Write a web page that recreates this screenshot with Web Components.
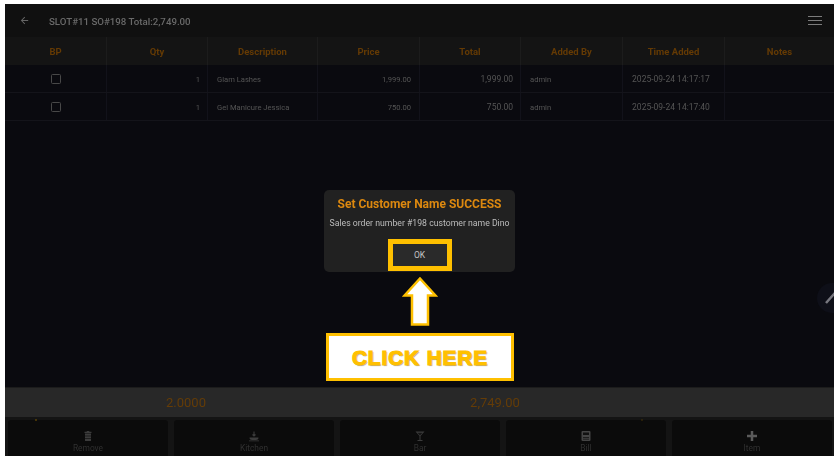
<!DOCTYPE html>
<html>
<head>
<meta charset="utf-8">
<title>SLOT#11</title>
<style>
html,body{margin:0;padding:0;background:#fff;}
body{font-family:Roboto,"Liberation Sans",sans-serif;}
</style>
</head>
<body>
<pos-screen>
    <pos-topbar title-text="SLOT#11 SO#198 Total:2,749.00"></pos-topbar>
    <order-table>
        <order-row bp qty="1" desc="Glam Lashes" price="1,999.00" total="1,999.00" by="admin" time="2025-09-24 14:17:17"></order-row>
        <order-row bp qty="1" desc="Gel Manicure Jessica" price="750.00" total="750.00" by="admin" time="2025-09-24 14:17:40"></order-row>
    </order-table>
    <total-bar qty="2.0000" amount="2,749.00"></total-bar>
    <action-bar>
        <action-button icon="trash" label="Remove"></action-button>
        <action-button icon="kitchen" label="Kitchen"></action-button>
        <action-button icon="bar" label="Bar"></action-button>
        <action-button icon="bill" label="Bill"></action-button>
        <action-button icon="plus" label="Item"></action-button>
    </action-bar>
    <msg-dialog slot="overlay" heading="Set Customer Name SUCCESS" message="Sales order number #198 customer name Dino"></msg-dialog>
    <click-callout slot="overlay"></click-callout>
</pos-screen>

<script>
const COLS = '102px 101px 110px 102px 101px 102px 102px 109px';

class PosScreen extends HTMLElement{
    constructor(){
        super();
        this.attachShadow({mode: 'open'});
        this.shadowRoot.innerHTML = `
        <style>
            :host{
                display: flex;
                flex-direction: column;
                position: relative;
                overflow: hidden;
                width: 829px;
                height: 452px;
                margin: 4px 4px 6px 5px;
                background: #0a0a0f;
                font-family: Roboto, "Liberation Sans", sans-serif;
            }
            .fab{
                position: absolute;
                left: 812px;
                top: 279px;
                width: 30px;
                height: 30px;
                border-radius: 50%;
                background: #0e0f18;
            }
            .fab svg{position: absolute; left: 8px; top: 8px; overflow: visible; filter: blur(.4px);}
            .dot{position: absolute; width: 2px; height: 2px; top: 415px; background: #5a4206; border-radius: 50%;}
        </style>
        <slot></slot>
        <div class="fab"><svg width="20" height="20" viewBox="0 0 20 20"><path d="M1 12 L9 3 L18 12" fill="none" stroke="#77777f" stroke-width="2.5"/></svg></div>
        <div class="dot" style="left:30px"></div>
        <div class="dot" style="left:636px;opacity:.5"></div>
        <slot name="overlay"></slot>`;
    }
}

class PosTopbar extends HTMLElement{
    constructor(){
        super();
        this.attachShadow({mode: 'open'});
    }
    connectedCallback(){
        this.shadowRoot.innerHTML = `
        <style>
            :host{
                display: flex;
                align-items: center;
                height: 33px;
                flex: none;
                background: #101010;
                color: #6a6a6a;
            }
            .back{margin-left: 14px; width: 11px; height: 11px; filter: blur(.4px);}
            .title{margin-left: 19px; font-size: 9.7px; font-weight: 500; flex: 1; position: relative; top: 1px; filter: blur(.4px);}
            .menu{margin-right: 12px; width: 14px; display: flex; flex-direction: column; gap: 2.6px; filter: blur(.3px);}
            .menu i{display: block; height: 1.4px; background: #7c7c7c;}
        </style>
        <svg class="back" viewBox="0 0 24 24"><path d="M20 11H7.8l5.6-5.6L12 4l-8 8 8 8 1.4-1.4L7.8 13H20z" fill="#666"/></svg>
        <div class="title">${this.getAttribute('title-text')}</div>
        <div class="menu"><i></i><i></i><i></i></div>`;
    }
}

class OrderTable extends HTMLElement{
    constructor(){
        super();
        this.attachShadow({mode: 'open'});
        const heads = ['BP','Qty','Description','Price','Total','Added By','Time Added','Notes'];
        this.shadowRoot.innerHTML = `
        <style>
            :host{display: block; flex: 1; min-height: 0;}
            .head{
                display: grid;
                grid-template-columns: ${COLS};
                height: 28px;
                background: #141414;
            }
            .head div{
                display: flex;
                align-items: center;
                justify-content: center;
                font-size: 9.5px;
                font-weight: 700;
                color: #643a04;
                border-right: 1px solid #1c1c1c;
                box-sizing: border-box;
            }
            .head div:last-child{border-right: 0;}
            .head span{filter: blur(.4px);}
        </style>
        <div class="head">${heads.map(h => `<div><span>${h}</span></div>`).join('')}</div>
        <slot></slot>`;
    }
}

class OrderRow extends HTMLElement{
    constructor(){
        super();
        this.attachShadow({mode: 'open'});
    }
    connectedCallback(){
        const a = n => this.getAttribute(n) || '';
        this.shadowRoot.innerHTML = `
        <style>
            :host{
                display: grid;
                grid-template-columns: ${COLS};
                height: 28px;
                box-sizing: border-box;
                border-bottom: 1px solid #14141a;
                background: #0a0a0f;
                color: #555;
                font-size: 8.5px;
            }
            div{display: flex; align-items: center; box-sizing: border-box; border-right: 1px solid #12121a; padding-top: 1px;}
            div:last-child{border-right: 0;}
            span{filter: blur(.35px);}
            .c{justify-content: center;}
            .r{justify-content: flex-end; padding-right: 7px;}
            .l{padding-left: 9px;}
            .sm{font-size: 7.6px;}
            .price{padding-right: 8px;}
            i{display: block; width: 8px; height: 8px; border: 1.3px solid #484848; border-radius: 1.5px; margin-right: 0; filter: blur(.3px);}
        </style>
        <div class="c"><i></i></div>
        <div class="r sm"><span>${a('qty')}</span></div>
        <div class="l sm"><span>${a('desc')}</span></div>
        <div class="r sm price"><span>${a('price')}</span></div>
        <div class="r"><span>${a('total')}</span></div>
        <div class="l sm"><span>${a('by')}</span></div>
        <div class="c" style="padding-right:5px"><span>${a('time')}</span></div>
        <div></div>`;
    }
}

class TotalBar extends HTMLElement{
    constructor(){
        super();
        this.attachShadow({mode: 'open'});
    }
    connectedCallback(){
        this.shadowRoot.innerHTML = `
        <style>
            :host{
                display: grid;
                grid-template-columns: 362px 256px 1fr;
                align-items: center;
                flex: none;
                height: 30px;
                background: #282828;
                border-top: 1px solid #1c1c1c;
                box-sizing: border-box;
                color: #643c07;
                font-size: 13px;
                text-align: center;
            }
            div{filter: blur(.4px);}
        </style>
        <div>${this.getAttribute('qty')}</div>
        <div>${this.getAttribute('amount')}</div>`;
    }
}

class ActionBar extends HTMLElement{
    constructor(){
        super();
        this.attachShadow({mode: 'open'});
        this.shadowRoot.innerHTML = `
        <style>
            :host{
                display: grid;
                grid-template-columns: repeat(5, 1fr);
                gap: 6px;
                flex: none;
                height: 39px;
                box-sizing: border-box;
                padding: 3px 2px 0 3px;
                background: #141414;
            }
        </style>
        <slot></slot>`;
    }
}

const ICONS = {
    trash: '<path d="M6 7h12v14a1 1 0 0 1-1 1H7a1 1 0 0 1-1-1zM5 3.5h4L10 2h4l1 1.5h4V6H5z" fill="#3c3c3c"/><path d="M6 12h12M6 17h12" stroke="#141414" stroke-width="1.5"/>',
    kitchen: '<path d="M3 15h18c0 3.5-2.5 5-5 5H8c-2.5 0-5-1.5-5-5zM2 21h20v1.6H2z" fill="#3c3c3c"/><path d="M12 3v9M9 9l3 3 3-3" fill="none" stroke="#3c3c3c" stroke-width="2.2"/>',
    bar: '<path d="M3 3h18l-8 9v8h4v2H7v-2h4v-8z" fill="#3c3c3c"/><path d="M7 5.5h10l-5 5.5z" fill="#141414"/>',
    bill: '<path d="M5 2h14a2 2 0 0 1 2 2v16a2 2 0 0 1-2 2H5a2 2 0 0 1-2-2V4a2 2 0 0 1 2-2z" fill="#444"/><path d="M6 5h12v5H6zM6 14h12v1.5H6zM6 17.5h12V19H6z" fill="#111"/>',
    plus: '<path d="M9.5 2h5v7.5H22v5h-7.500V22h-5v-7.500H2v-5h7.500z" fill="#5a5a5a"/>'
};

class ActionButton extends HTMLElement{
    constructor(){
        super();
        this.attachShadow({mode: 'open'});
    }
    connectedCallback(){
        this.shadowRoot.innerHTML = `
        <style>
            :host{
                display: flex;
                flex-direction: column;
                align-items: center;
                justify-content: flex-end;
                gap: 1px;
                padding-bottom: 3px;
                background: #0b0b0b;
                border-radius: 3px 3px 0 0;
                color: #303030;
                font-size: 8.4px;
                line-height: 10px;
            }
            svg{width: 12px; height: 12px; display: block; filter: blur(.35px);}
            div{filter: blur(.35px);}
        </style>
        <svg viewBox="0 0 24 24">${ICONS[this.getAttribute('icon')]}</svg>
        <div>${this.getAttribute('label')}</div>`;
    }
}

class MsgDialog extends HTMLElement{
    constructor(){
        super();
        this.attachShadow({mode: 'open'});
    }
    connectedCallback(){
        this.shadowRoot.innerHTML = `
        <style>
            :host{
                position: absolute;
                left: 319px;
                top: 186px;
                width: 191px;
                height: 82px;
                box-sizing: border-box;
                display: flex;
                flex-direction: column;
                align-items: center;
                background: #212121;
                border-radius: 5px;
            }
            h1{margin: 7px 0 0; font-size: 12px; line-height: 14px; font-weight: 700; color: #dc880f; white-space: nowrap; filter: blur(.3px);}
            p{margin: 7px 0 0; font-size: 8.7px; line-height: 11px; color: #bdbdbd; white-space: nowrap; filter: blur(.25px);}
            button{
                margin-top: 10px;
                width: 64px;
                height: 32px;
                box-sizing: border-box;
                border: 5px solid #ffc000;
                background: #2a2a2a;
                color: #c4c4c4;
                font: 8.5px Roboto, "Liberation Sans", sans-serif;
                padding: 0;
            }
        </style>
        <h1>${this.getAttribute('heading')}</h1>
        <p>${this.getAttribute('message')}</p>
        <button>OK</button>`;
    }
}

class ClickCallout extends HTMLElement{
    constructor(){
        super();
        this.attachShadow({mode: 'open'});
        this.shadowRoot.innerHTML = `
        <style>
            :host{
                position: absolute;
                left: 321px;
                top: 273px;
                width: 188px;
                display: flex;
                flex-direction: column;
                align-items: center;
                gap: 7px;
            }
            svg{display: block;}
            .box{
                width: 188px;
                height: 48px;
                box-sizing: border-box;
                border: 3px solid #ffc000;
                padding-top: 1px;
                background: #fff;
                display: flex;
                align-items: center;
                justify-content: center;
                font: 900 20.8px "Liberation Sans", Arial, sans-serif;
                letter-spacing: .9px;
                color: #ffc000;
                -webkit-text-stroke: 1.2px #ffc000;
                text-shadow: 1px 1px 1px #9a9a9a;
            }
        </style>
        <svg width="36" height="49" viewBox="0 0 36 49">
            <path d="M18 1.5 L33.5 18.5 H26 V47.5 H10 V18.5 H2.5 Z" fill="#fff" stroke="#ffc000" stroke-width="2.5"/>
        </svg>
        <div class="box">CLICK HERE</div>`;
    }
}

window.customElements.define('pos-screen', PosScreen);
window.customElements.define('pos-topbar', PosTopbar);
window.customElements.define('order-table', OrderTable);
window.customElements.define('order-row', OrderRow);
window.customElements.define('total-bar', TotalBar);
window.customElements.define('action-bar', ActionBar);
window.customElements.define('action-button', ActionButton);
window.customElements.define('msg-dialog', MsgDialog);
window.customElements.define('click-callout', ClickCallout);
</script>
</body>
</html>
